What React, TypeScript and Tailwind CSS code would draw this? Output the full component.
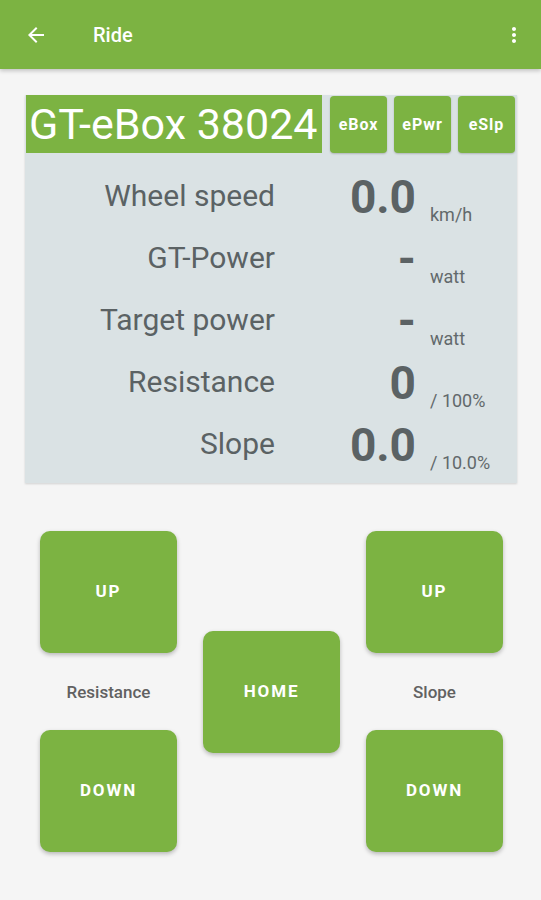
import React from "react";

const rows = [
  { label: "Wheel speed", value: "0.0", unit: "km/h" },
  { label: "GT-Power", value: "-", unit: "watt" },
  { label: "Target power", value: "-", unit: "watt" },
  { label: "Resistance", value: "0", unit: "/ 100%" },
  { label: "Slope", value: "0.0", unit: "/ 10.0%" },
];

function BigButton({ children }: { children: React.ReactNode }) {
  return (
    <div className="w-[137px] h-[122px] rounded-[10px] bg-[#7cb342] shadow-[0_2px_4px_rgba(0,0,0,0.25)] flex items-center justify-center text-white font-bold text-[17px] tracking-[0.11em]">
      {children}
    </div>
  );
}

export default function App() {
  return (
    <div className="w-[541px] h-[900px] bg-[#f5f5f5] overflow-hidden" style={{ fontFamily: "Roboto, 'Noto Sans', sans-serif" }}>
      <div className="h-[69px] bg-[#7cb342] shadow-[0_2px_4px_rgba(0,0,0,0.2)] flex items-center relative z-10">
        <svg className="ml-[24px]" width="24" height="24" viewBox="0 0 24 24">
          <path d="M20 11H7.83l5.59-5.59L12 4l-8 8 8 8 1.41-1.41L7.83 13H20v-2z" fill="white" />
        </svg>
        <span className="ml-[45px] text-white text-[20px] font-medium">Ride</span>
        <div className="ml-auto mr-[15px]">
          <svg width="24" height="24" viewBox="0 0 24 24">
            <path d="M12 8c1.1 0 2-.9 2-2s-.9-2-2-2-2 .9-2 2 .9 2 2 2zm0 2c-1.1 0-2 .9-2 2s.9 2 2 2 2-.9 2-2-.9-2-2-2zm0 6c-1.1 0-2 .9-2 2s.9 2 2 2 2-.9 2-2-.9-2-2-2z" fill="white" />
          </svg>
        </div>
      </div>

      <div className="ml-[25px] mt-[26px] w-[492px] h-[388px] bg-[#dae2e4] shadow-[0_1px_2px_rgba(0,0,0,0.15)]">
        <div className="flex items-start">
          <div className="ml-[1px] w-[296px] h-[58px] bg-[#7cb342] flex items-center pl-[3px] text-white text-[43px] leading-none whitespace-nowrap overflow-hidden">
            GT-eBox 38024
          </div>
          <div className="ml-[8px] mt-[1px] flex gap-[7px]">
            {["eBox", "ePwr", "eSlp"].map((t) => (
              <div key={t} className="w-[57px] h-[57px] rounded-[4px] bg-[#7cb342] shadow-[0_1px_2px_rgba(0,0,0,0.2)] flex items-center justify-center text-white font-bold text-[16px] tracking-[0.06em]">
                {t}
              </div>
            ))}
          </div>
        </div>
        <div className="pt-[3px]">
          {rows.map((r) => (
            <div key={r.label} className="h-[62px] flex items-baseline text-[#5b6264]">
              <div className="w-[250px] text-right text-[30px]">{r.label}</div>
              <div className="w-[141px] text-right text-[46px] font-bold translate-y-[7px]">{r.value}</div>
              <div className="ml-[14px] text-[18px] text-[#62696b] translate-y-[15px]">{r.unit}</div>
            </div>
          ))}
        </div>
      </div>

      <div className="mt-[48px] ml-[40px] grid grid-cols-[137px_137px_137px] gap-x-[26px]">
        <div className="flex flex-col items-center">
          <BigButton>UP</BigButton>
          <div className="h-[77px] pt-[2px] flex items-center text-[17px] font-medium text-[#616161]">Resistance</div>
          <BigButton>DOWN</BigButton>
        </div>
        <div className="flex items-center">
          <BigButton>HOME</BigButton>
        </div>
        <div className="flex flex-col items-center">
          <BigButton>UP</BigButton>
          <div className="h-[77px] pt-[2px] flex items-center text-[17px] font-medium text-[#616161]">Slope</div>
          <BigButton>DOWN</BigButton>
        </div>
      </div>
    </div>
  );
}
